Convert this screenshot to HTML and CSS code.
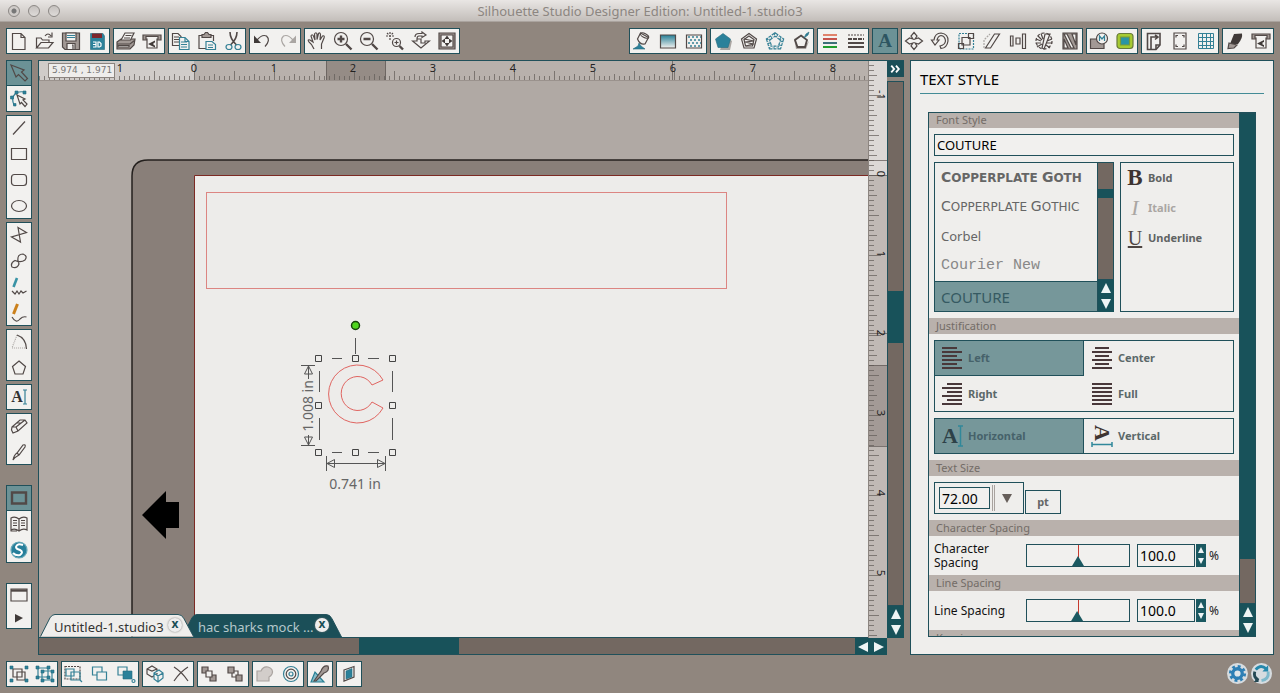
FILE: index.html
```html
<!DOCTYPE html>
<html lang="en">
<head>
<meta charset="utf-8">
<title>Silhouette Studio Designer Edition: Untitled-1.studio3</title>
<link rel="stylesheet" href="styles.css">
</head>
<body>
<header class="titlebar">
  <div class="lights"><button class="light dot" aria-label="Close"></button><button class="light" aria-label="Minimize"></button><button class="light" aria-label="Zoom"></button></div>
  <h1 class="title">Silhouette Studio Designer Edition: Untitled-1.studio3</h1>
</header>

<nav class="toolbar" aria-label="Main toolbar">
  <div class="group">
    <button class="tool" aria-label="New"><svg viewBox="0 0 20 20"><path d="M3.500 2.500H12L16 6.500V18.500H3.500ZM12 2.500V6.500H16"/></svg></button>
    <button class="tool" aria-label="Open"><svg viewBox="0 0 20 20"><path d="M1.500 17V7H6L7.500 9H14V11M1.500 17L6 11.500H18L13.500 17ZM10 5Q13 1 16 5M17 1.500V6H13"/></svg></button>
    <button class="tool" aria-label="Save"><svg viewBox="0 0 20 20"><path class="grayfill" d="M1.500 2H18.500V18.500H4L1.500 16Z"/><path class="whitefill" d="M5 2H15V10H5ZM6 12.500H14V18.500H6ZM11 14H12V18"/><path class="teal" d="M6 4.500H14M6 6.500H14"/></svg></button>
    <button class="tool" aria-label="Save to card"><svg viewBox="0 0 20 20"><path class="tealfill" d="M3.500 2.500H16L17.500 5V18.500H3.500Z"/><path class="redfill" d="M5 2.500H15V7H5Z"/><path class="white" d="M6 11H9V16H6M6 13.500H9M11 11H12.500L14 12.500V15L12.500 16H11Z"/></svg></button>
  </div>
  <div class="group">
    <button class="tool" aria-label="Print"><svg viewBox="0 0 20 20"><path class="grayfill" d="M1 11L5 8H19L18 14L14 18H1Z"/><path class="whitefill" d="M5 9L9 2H18L14.500 9Z"/><path d="M9.500 4.500H15.500M8 7H14M1 13H14L18.500 9.500"/><path class="whitefill" d="M2 14.500H13V16H2Z"/></svg></button>
    <button class="tool" aria-label="Send to Silhouette"><svg viewBox="0 0 20 20"><path class="grayfill" d="M1 4H19V9H1Z"/><path class="whitefill" d="M4 5.500H16V8H15V17H5V8H4Z"/><path class="darkfill" d="M6 13L13 9.500V11.500L11.500 12V14L13 14.500V16.500Z"/></svg></button>
  </div>
  <div class="group">
    <button class="tool" aria-label="Copy"><svg viewBox="0 0 20 20"><path class="whitefill" d="M1.500 2.500H7L10 5.500V14.500H1.500Z"/><path d="M3 6H8M3 8.500H8M3 11H8"/><path class="whitefill teal" d="M8.500 6.500H14L18 10.500V18.500H8.500Z"/><path class="teal" d="M10 11H16M10 13.500H16M10 16H16M14 7V10.500H18"/></svg></button>
    <button class="tool" aria-label="Paste"><svg viewBox="0 0 20 20"><path class="grayfill" d="M5 3.500H7L8.500 1.500H10.500L12 3.500H14V6.500H5Z"/><path d="M5 4.500H2V17.500H9M14 4.500H16.500V10"/><path class="whitefill teal" d="M9 10.500H15L18.500 13.500V18.500H9Z"/><path class="teal" d="M11 14H16M11 16.500H16"/></svg></button>
    <button class="tool" aria-label="Cut"><svg viewBox="0 0 20 20"><path d="M7 1Q7 8 13.500 14M14 1Q14 8 7.500 14" stroke-width="1.600"/><ellipse class="teal" cx="6" cy="16" rx="3" ry="2.500"/><ellipse class="teal" cx="15" cy="16" rx="3" ry="2.500"/></svg></button>
  </div>
  <div class="group">
    <button class="tool" aria-label="Undo"><svg viewBox="0 0 20 20"><path d="M5 9Q10 3 14.500 5Q19 9 13 15.500"/><path class="darkfill" d="M2 4.500V12H9Z"/></svg></button>
    <button class="tool" aria-label="Redo"><svg viewBox="0 0 20 20"><path class="faint" d="M15 9Q10 3 5.500 5Q1 9 7 15.500"/><path class="faintfill" d="M18 4.500V12H11Z"/></svg></button>
  </div>
  <div class="group">
    <button class="tool" aria-label="Pan"><svg viewBox="0 0 20 20"><path d="M7 18Q5 13 2 11Q0 8 3 9L6 11L4 5Q5 2.500 6.500 5L8 9L7.500 3Q9 .5 10 3V8.500L11.500 2.500Q13 1 13.500 3.500L13 9L15.500 5Q18 4 17 7L14.500 13V18"/></svg></button>
    <button class="tool" aria-label="Zoom in"><svg viewBox="0 0 20 20"><circle cx="8" cy="8" r="6.500"/><path class="heavy" d="M4.500 8H11.500M8 4.500V11.500M13 13L18.500 18.500"/></svg></button>
    <button class="tool" aria-label="Zoom out"><svg viewBox="0 0 20 20"><circle cx="8" cy="8" r="6.500"/><path class="heavy" d="M4.500 8H11.500M13 13L18.500 18.500"/></svg></button>
    <button class="tool" aria-label="Zoom selection"><svg viewBox="0 0 20 20"><circle cx="11.500" cy="11.500" r="4"/><path stroke-dasharray="2 1" d="M1 5H9M5 1V9M2 2L4 4M8 2L6 4"/><path d="M11.500 9.500V13.500M9.500 11.500H13.500"/><path class="heavy" d="M14.500 15L18 18.500"/></svg></button>
    <button class="tool" aria-label="Drag zoom"><svg viewBox="0 0 20 20"><path d="M10 17L1.500 10H6V8H10V12H14V10H18.500ZM4 6Q4 2.500 8 2.500H11V1L15 4L11 6.500V5H8Q6 5 6 8"/></svg></button>
    <button class="tool" aria-label="Fit to page"><svg viewBox="0 0 20 20"><path class="grayfill" d="M2 2H18V18H2Z"/><path class="whitefill" d="M4 4H16V16H4Z"/><path class="darkfill" d="M10 4.500L12.500 8H7.500ZM10 15.500L12.500 12H7.500ZM4.500 10L8 7.500V12.500ZM15.500 10L12 7.500V12.500Z"/></svg></button>
  </div>
  <div class="group push">
    <button class="tool" aria-label="Fill color"><svg viewBox="0 0 20 20"><path class="tealfill" d="M1 18L6 15L7 12L9 15L13 18Z"/><path class="whitefill" d="M8.500 2L16.500 6.500L13 13Q8 14 5.500 8Z"/><ellipse cx="12.500" cy="4.500" rx="4.500" ry="2" transform="rotate(28 12.500 4.500)"/></svg></button>
    <button class="tool" aria-label="Fill gradient"><svg viewBox="0 0 20 20"><defs><linearGradient id="fade" x2="0" y2="1"><stop offset="0" stop-color="#267f96"/><stop offset="1" stop-color="#f3f2f0"/></linearGradient></defs><path fill="url(#fade)" d="M2.500 4H17.500V17H2.500Z"/></svg></button>
    <button class="tool" aria-label="Fill pattern"><svg viewBox="0 0 20 20"><path d="M2.500 4H17.500V17H2.500Z"/><path class="teal dots" d="M4 6H17M6 9H17M4 12H17M6 15H17"/></svg></button>
  </div>
  <div class="group">
    <button class="tool" aria-label="Solid shape"><svg viewBox="0 0 20 20"><path fill="#aaa5a1" stroke="none" d="M12 5L19 10L17 19H7Z"/><path class="tealfill" d="M10 2.500L17.500 8L15 16.500H5L2.500 8Z"/></svg></button>
    <button class="tool" aria-label="Sketch"><svg viewBox="0 0 20 20"><path d="M10 2.500L17.500 8L15 17H5L2.500 8ZM10 5L15 8.500L13.500 15H6.500L5 8.500Z"/><path d="M5 8L15 10L6 11L14 13L7 15"/></svg></button>
    <button class="tool" aria-label="Rhinestone"><svg viewBox="0 0 20 20"><path class="teal dots wide" d="M10 3.500L17 8.500L14.500 16.500H5.500L3 8.500Z"/><path class="gap" d="M10 3.500L17 8.500L14.500 16.500H5.500L3 8.500Z"/></svg></button>
    <button class="tool" aria-label="Shadow"><svg viewBox="0 0 20 20"><path fill="#aaa5a1" stroke="none" d="M8 5L3 8L5 18H15L18 10L14 15H7Z"/><path class="whitefill" stroke-width="1.800" d="M10 4.500L16 9L14 16H6.500L4 9Z"/><path class="tealfill" d="M13 7L15 3L18 1L17 4Z"/></svg></button>
  </div>
  <div class="group">
    <button class="tool" aria-label="Line color"><svg viewBox="0 0 20 20"><path stroke="#e0826b" stroke-width="2" d="M3 4H17"/><path stroke="#c5524b" stroke-width="2" d="M3 8H17"/><path stroke="#3d7079" stroke-width="2" d="M3 12H17"/><path stroke="#1f9d2e" stroke-width="2" d="M3 16H17"/></svg></button>
    <button class="tool" aria-label="Line style"><svg viewBox="0 0 20 20"><path stroke-dasharray="2 1" d="M2 4H18"/><path stroke-dasharray="4 1" stroke-width="2" d="M2 8H18"/><path stroke-width="2" d="M2 12H18M2 16H18"/></svg></button>
  </div>
  <div class="group"><button class="tool on" aria-label="Text style" aria-pressed="true"><span class="letter">A</span></button></div>
  <div class="group">
    <button class="tool" aria-label="Move"><svg viewBox="0 0 20 20"><path d="M10 1.500L13 5L11 8L14.500 7L18.500 10L14.500 13L11 12L13 15L10 18.500L7 15L9 12L5.500 13L1.500 10L5.500 7L9 8L7 5Z"/></svg></button>
    <button class="tool" aria-label="Rotate"><svg viewBox="0 0 20 20"><path d="M1.500 9H4Q5 2 11 2Q18.500 3 18 10Q17 17 11 17.500L10 15Q15 14 15.500 10Q15 5 11 4.500Q8 5 7 9H9L5 14Z"/></svg></button>
    <button class="tool" aria-label="Scale"><svg viewBox="0 0 20 20"><path class="teal" stroke-dasharray="2 1" d="M3 2.500H17.500V18H3Z"/><path d="M2.500 12.500H7.500V17.500H2.500ZM6 6.500H14V14H6ZM12.500 2.500H17.500V7.500H12.500Z"/></svg></button>
    <button class="tool" aria-label="Shear"><svg viewBox="0 0 20 20"><path class="faint" stroke-dasharray="2 1" d="M2 17V9L8 3"/><path d="M3.500 17L12.500 3H17.500L8.500 17Z"/></svg></button>
    <button class="tool" aria-label="Align"><svg viewBox="0 0 20 20"><path d="M2.500 5H5V15H2.500ZM8 7H12V13H8ZM14.500 3H17.500V17.500H14.500Z"/></svg></button>
    <button class="tool" aria-label="Replicate"><svg viewBox="0 0 20 20"><path d="M8 17L11 3L16 3L10 18ZM4 5L8 9M2 8L7 10M1.500 12L7 12M3 16L8 13M7 2.500L9 8M13 10L18 8M12 12L18.500 12M12 14L16 17"/><circle cx="10" cy="10" r="8" stroke-dasharray="3 2"/></svg></button>
    <button class="tool" aria-label="Nesting"><svg viewBox="0 0 20 20"><path class="grayfill" d="M3 2H17V18H3Z"/><path class="whitefill" d="M4 3H7L14 17H11ZM4 8L8 17H4ZM12 3H16V14Z"/></svg></button>
  </div>
  <div class="group">
    <button class="tool" aria-label="Modify"><svg viewBox="0 0 20 20"><path class="grayfill" d="M1.500 8H15V17.500H1.500Z"/><circle class="whitefill" cx="13" cy="7.500" r="5.500"/><path class="teal" d="M10.500 10V5L13 8L15.500 5V10"/></svg></button>
    <button class="tool" aria-label="Trace"><svg viewBox="0 0 20 20"><rect x="2" y="2.500" width="16" height="15" rx="3" fill="#a7cb32" stroke="#687b3b"/><path fill="#2a94a5" stroke="#7c9c35" d="M5.500 6H14.500V14H5.500Z"/></svg></button>
  </div>
  <div class="group">
    <button class="tool" aria-label="Page setup"><svg viewBox="0 0 20 20"><path stroke-width="1.600" d="M3.500 2.500H16V14L12 18.500H3.500Z"/><path stroke-width="1.600" d="M7 18V6H14M11 4L14 6L11 8.500M12 18V14H16"/></svg></button>
    <button class="tool" aria-label="Registration marks"><svg viewBox="0 0 20 20"><path d="M4 2H16V18H4Z"/><path d="M6 6.500V4.500H8M12 4.500H14V6.500M14 13.500V15.500H12M8 15.500H6V13.500"/></svg></button>
    <button class="tool" aria-label="Grid"><svg viewBox="0 0 20 20"><path class="teal thin" d="M2.500 2.500H17.500V17.500H2.500ZM6.500 2.500V17.500M10.500 2.500V17.500M14.500 2.500V17.500M2.500 6.500H17.500M2.500 10.500H17.500M2.500 14.500H17.500"/></svg></button>
  </div>
  <div class="group">
    <button class="tool" aria-label="Cut settings"><svg viewBox="0 0 20 20"><path class="darkfill" d="M9 3L17 2.500Q18 7 13 13H5Z"/><path class="grayfill" d="M4 12L12 14L9 17L3 17.500Z"/></svg></button>
    <button class="tool" aria-label="Cut"><svg viewBox="0 0 20 20"><path class="grayfill" d="M1 3H19V8H1Z"/><path class="whitefill" d="M4 4.500H16V7H15V17H5V7H4Z"/><path class="darkfill" d="M6 12.500L13 9V11L11.500 11.500V13.500L13 14V16Z"/></svg></button>
  </div>
</nav>

<main class="main">
  <nav class="sidebar" aria-label="Drawing tools">
    <div class="group">
      <button class="tool on" aria-label="Select" aria-pressed="true"><svg viewBox="0 0 20 20"><path d="M2 2L15 7L12.500 9L18.500 15.500L16 18L9.500 11.500L7 14Z"/></svg></button>
      <button class="tool" aria-label="Edit points"><svg viewBox="0 0 20 20"><path class="teal" d="M5 16Q2 9 6 5Q9 2 15 3"/><path class="tealfill" d="M1.500 7H4.500V10H1.500ZM4.500 14.500H7V17H4.500ZM6 2H9V5H6ZM14 2H17V5H14Z"/><path class="whitefill" d="M8 6L16 10L14 11L18 15L16 17.500L12.500 13.500L11 15Z"/></svg></button>
    </div>
    <div class="group">
      <button class="tool" aria-label="Line"><svg viewBox="0 0 20 20"><path d="M4 16.500L16 3.500"/></svg></button>
      <button class="tool" aria-label="Rectangle"><svg viewBox="0 0 20 20"><path d="M2.500 4.500H17.500V15.500H2.500Z"/></svg></button>
      <button class="tool" aria-label="Rounded rectangle"><svg viewBox="0 0 20 20"><rect x="2.500" y="4.500" width="15" height="11" rx="3"/></svg></button>
      <button class="tool" aria-label="Ellipse"><svg viewBox="0 0 20 20"><ellipse cx="10" cy="10" rx="7.500" ry="5.500"/></svg></button>
    </div>
    <div class="group">
      <button class="tool" aria-label="Polygon"><svg viewBox="0 0 20 20"><path d="M9 2.500L17.500 7.500L2.500 12L11.500 17Z"/></svg></button>
      <button class="tool" aria-label="Curve"><svg viewBox="0 0 20 20"><path d="M9 10Q8 3 14 3Q19 5 16 9Q12 12 6 9.500Q1 12 3 16Q8 18 10 13Z"/></svg></button>
      <button class="tool" aria-label="Freehand"><svg viewBox="0 0 20 20"><path stroke="#3993a5" stroke-width="2.600" d="M8 1L4.500 10"/><path d="M3 14L6 17L8 14L10 17L12 14L14 16L17.500 14"/></svg></button>
      <button class="tool" aria-label="Smooth freehand"><svg viewBox="0 0 20 20"><path stroke="#cb801b" stroke-width="3" d="M8.500 1L4.500 11"/><path d="M3 14Q7 21 11 16Q14 13 17.500 14"/></svg></button>
    </div>
    <div class="group">
      <button class="tool" aria-label="Arc"><svg viewBox="0 0 20 20"><path class="faint" stroke-dasharray="1 1" d="M8 3L3 16H17"/><path d="M8 3Q17 6 17.500 17"/></svg></button>
      <button class="tool" aria-label="Regular polygon"><svg viewBox="0 0 20 20"><path d="M10 3L16.500 8.500L14 16H6L3.500 8.500Z"/></svg></button>
    </div>
    <div class="group"><button class="tool" aria-label="Text"><span class="letter small">A</span><svg class="cursor" viewBox="0 0 4 16"><path class="teal" d="M0 1H4M2 1V15M0 15H4"/></svg></button></div>
    <div class="group">
      <button class="tool" aria-label="Eraser"><svg viewBox="0 0 20 20"><path d="M3 11L11 4L16 4L18 7L9 15L4 17L2.500 14ZM3 11L7 11L9 15M7 11L16 4M8 7L12 7"/></svg></button>
      <button class="tool" aria-label="Knife"><svg viewBox="0 0 20 20"><path d="M4 18Q5 13 8 11L14 3Q17 2 16 5L10 13Q6 15 4 18ZM8 11L10 13"/></svg></button>
    </div>
    <div class="group apart">
      <button class="tool on" aria-label="Page view" aria-pressed="true"><svg viewBox="0 0 20 20"><path class="heavy" d="M3 4.500H17V15.500H3Z"/></svg></button>
      <button class="tool" aria-label="Library"><svg viewBox="0 0 20 20"><path d="M10 5Q6 2 2 4V16Q6 14 10 17Q14 14 18 16V4Q14 2 10 5V17M4 6.500H8M4 9H8M4 11.500H8M12 6.500H16M12 9H16M12 11.500H16M1.500 17H8"/></svg></button>
      <button class="tool" aria-label="Store"><svg viewBox="0 0 20 20"><circle cx="10" cy="10" r="8" fill="#277f9b" stroke="#69a9b8"/><path stroke="#fff" stroke-width="2" d="M14 5Q8 3 7 7Q7 9 11 10Q15 12 11 15Q7 16 4 13"/></svg></button>
    </div>
    <div class="group apart short">
      <button class="tool" aria-label="Window"><svg viewBox="0 0 20 20"><path d="M2 4H18V16H2Z"/><path class="heavy" d="M2 5.500H18"/></svg></button>
      <button class="tool" aria-label="Play"><svg viewBox="0 0 20 20"><path class="darkfill" d="M6 6L14 10L6 14.500Z"/></svg></button>
    </div>
  </nav>

  <section class="workspace">
    <div class="ruler-h">
      <svg class="fill" aria-hidden="true">
        <defs><pattern id="hticks" width="80" height="20" x="155" patternUnits="userSpaceOnUse"><path class="tick" d="M.5 10V20M5.500 15V20M10.500 15V20M15.500 15V20M20.500 13V20M25.500 15V20M30.500 15V20M35.500 15V20M40.500 10V20M45.500 15V20M50.500 15V20M55.500 15V20M60.500 13V20M65.500 15V20M70.500 15V20M75.500 15V20"/></pattern></defs>
        <rect width="155" height="20" fill="#d0ccc9"/><rect x="287" width="60" height="20" fill="#958c86"/>
        <rect width="100%" height="20" fill="url(#hticks)"/><path class="mark" d="M287.500 0V20M346.500 0V20M633.500 0V20"/>
        <g class="digits"><text x="81" y="11">1</text><text x="155" y="11">0</text><text x="235" y="11">1</text><text x="314" y="11">2</text><text x="394" y="11">3</text><text x="474" y="11">4</text><text x="554" y="11">5</text><text x="634" y="11">6</text><text x="714" y="11">7</text><text x="794" y="11">8</text></g>
      </svg>
      <output class="coords">5.974 , 1.971</output>
    </div>
    <div class="canvas">
      <svg class="fill" role="img" aria-label="Drawing page"><g transform="translate(-39 -81)">
        <path class="mat" d="M2000 160H148Q132 160 132 176V2000H2000Z"/>
        <path class="page" d="M2000 175.500H194.500V2000H2000Z"/>
        <rect class="shape" x="206.500" y="192.500" width="520" height="96"/>
        <path class="shape bright" d="M383 380A29 29 0 1 0 383 408L372 402A16.500 17 0 1 1 372 385Z"/>
        <g class="guide"><path d="M355.500 338V354M332 358.500H342M368 358.500H379M332 452.500H342M368 452.500H379M319.500 371V392M319.500 418V440M392.500 371V392M392.500 418V440"/>
        <path class="handle" d="M315.500 355.500h6v6h-6zM352.500 355.500h6v6h-6zM389.500 355.500h6v6h-6zM315.500 402.500h6v6h-6zM389.500 402.500h6v6h-6zM315.500 449.500h6v6h-6zM352.500 449.500h6v6h-6zM389.500 449.500h6v6h-6z"/>
        <path d="M301 365.500H315M301 445.500H315M308.500 366V379M308.500 435V445M308.500 366L304.500 374H312.500ZM308.500 445L304.500 437H312.500ZM326.500 456V471M385.500 456V471M327 463.500H385M327 463.500L334.500 459.500V467.500ZM385 463.500L377.500 459.500V467.500Z"/></g>
        <circle cx="355.500" cy="325.500" r="4" fill="#4fd51e" stroke="#16420b" stroke-width="1.500"/>
        <text class="measure" x="355" y="489">0.741 in</text><text class="measure" transform="translate(313 406) rotate(-90)">1.008 in</text>
        <path fill="#000" d="M142 515L166 491V502H179V528H166V539Z"/>
      </g></svg>
      <div class="tabs">
        <button class="tab current"><svg class="tabshape" viewBox="0 0 154 24" preserveAspectRatio="none"><path d="M.5 23.500L10 4Q12 .5 15 .5H138Q142 .5 144 5L153.500 23.500"/></svg><span>Untitled-1.studio3</span><b class="close">x</b></button>
        <button class="tab"><svg class="tabshape" viewBox="0 0 154 24" preserveAspectRatio="none"><path d="M0 12L4 4Q6 .5 9 .5H138Q142 .5 144 5L153.500 24H6Z"/></svg><span>hac sharks mock ...</span><b class="close">x</b></button>
      </div>
    </div>
    <div class="ruler-v">
      <svg class="fill" aria-hidden="true">
        <defs><pattern id="vticks" width="20" height="80" y="114" patternUnits="userSpaceOnUse"><path class="tick" d="M0 .5H12M0 5.500H5M0 10.500H5M0 15.500H5M0 20.500H8M0 25.500H5M0 30.500H5M0 35.500H5M0 40.500H10M0 45.500H5M0 50.500H5M0 55.500H5M0 60.500H8M0 65.500H5M0 70.500H5M0 75.500H5"/></pattern></defs>
        <rect width="20" height="114" fill="#dcd8d6"/><rect y="304" width="20" height="81" fill="#a39a96"/>
        <rect width="20" height="100%" fill="url(#vticks)"/><path class="mark" d="M0 99.500H20M0 114.500H20M0 272.500H20M0 304.500H20M0 385.500H20"/>
        <g class="digits"><text transform="translate(8 34) rotate(90)">-1</text><text transform="translate(8 113) rotate(90)">0</text><text transform="translate(8 193) rotate(90)">1</text><text transform="translate(8 272) rotate(90)">2</text><text transform="translate(8 352) rotate(90)">3</text><text transform="translate(8 432) rotate(90)">4</text><text transform="translate(8 512) rotate(90)">5</text></g>
      </svg>
    </div>
    <div class="side-scroll">
      <button class="expand" aria-label="Collapse panel"><svg viewBox="0 0 17 17"><path d="M4 5L7 8.500L4 12M9 5L12 8.500L9 12"/></svg></button>
      <div class="track"><div class="thumb"></div></div>
      <button class="arrow" aria-label="Scroll up"><svg viewBox="0 0 16 16"><path d="M8 3L13 13H3Z"/></svg></button>
      <button class="arrow" aria-label="Scroll down"><svg viewBox="0 0 16 16"><path d="M8 13L13 3H3Z"/></svg></button>
    </div>
    <div class="bottom-scroll">
      <div class="track"><div class="thumb"></div></div>
      <button class="arrow" aria-label="Scroll left"><svg viewBox="0 0 16 16"><path d="M3 8L13 3V13Z"/></svg></button>
      <button class="arrow" aria-label="Scroll right"><svg viewBox="0 0 16 16"><path d="M13 8L3 3V13Z"/></svg></button>
    </div>
  </section>

  <aside class="panel">
    <h2 class="panel-title">TEXT STYLE</h2>
    <div class="scrollbox">
      <form class="options">
        <h3 class="section first">Font Style</h3>
        <div class="block">
          <input class="field fontname" aria-label="Font name" value="COUTURE">
          <div class="fonts">
            <div class="fontlist">
              <button type="button" class="font caps strong"><span>Copperplate</span> <span>Goth</span></button>
              <button type="button" class="font caps"><span>Copperplate</span> <span>Gothic</span></button>
              <button type="button" class="font">Corbel</button>
              <button type="button" class="font mono">Courier New</button>
              <button type="button" class="font chosen">COUTURE</button>
            </div>
            <div class="list-scroll"><div class="track"><div class="thumb"></div></div>
              <button type="button" class="arrow" aria-label="Previous fonts"><svg viewBox="0 0 16 16"><path d="M8 3L13 13H3Z"/></svg></button>
              <button type="button" class="arrow" aria-label="Next fonts"><svg viewBox="0 0 16 16"><path d="M8 13L13 3H3Z"/></svg></button>
            </div>
            <div class="styles">
              <button type="button" class="style"><span class="glyph bold">B</span>Bold</button>
              <button type="button" class="style" disabled><span class="glyph italic">I</span>Italic</button>
              <button type="button" class="style"><span class="glyph under">U</span>Underline</button>
            </div>
          </div>
        </div>
        <h3 class="section">Justification</h3>
        <div class="block">
          <div class="choices">
            <label class="choice"><input type="radio" name="just" checked><svg viewBox="0 0 20 22"><path d="M0 1H15M0 5H20M0 9H15M0 13H20M0 17H15M0 21H20"/></svg>Left</label>
            <label class="choice"><input type="radio" name="just"><svg viewBox="0 0 20 22"><path d="M3 1H17M0 5H20M3 9H17M0 13H20M3 17H17M0 21H20"/></svg>Center</label>
            <label class="choice"><input type="radio" name="just"><svg viewBox="0 0 20 22"><path d="M5 1H20M0 5H20M5 9H20M0 13H20M5 17H20M0 21H20"/></svg>Right</label>
            <label class="choice"><input type="radio" name="just"><svg viewBox="0 0 20 22"><path d="M0 1H20M0 5H20M0 9H20M0 13H20M0 17H20M0 21H20"/></svg>Full</label>
          </div>
          <div class="choices">
            <label class="choice"><input type="radio" name="dir" checked><span class="dir">A<svg class="ibar" viewBox="0 0 5 22"><path d="M0 1H5M2.500 1V21M0 21H5"/></svg></span>Horizontal</label>
            <label class="choice"><input type="radio" name="dir"><span class="dir vertical"><i>A</i><svg class="hbar" viewBox="0 0 22 5"><path d="M1 0V5M1 2.500H21M21 0V5"/></svg></span>Vertical</label>
          </div>
        </div>
        <h3 class="section">Text Size</h3>
        <div class="block size">
          <div class="combo"><input class="field" aria-label="Text size" value="72.00"><button type="button" class="drop" aria-label="Choose size"><svg viewBox="0 0 10 9"><path d="M0 0H10L5 9Z"/></svg></button></div>
          <button type="button" class="unit">pt</button>
        </div>
        <h3 class="section">Character Spacing</h3>
        <div class="block row">
          <label class="name" for="cs">Character Spacing</label><input id="cs" class="slider" type="range" value="50">
          <div class="number"><input class="field" aria-label="Character spacing percent" value="100.0"><button type="button" class="stepper" aria-label="Adjust character spacing"><svg viewBox="0 0 10 23"><path d="M5 3L8 9H2ZM5 20L8 14H2Z"/></svg></button><span class="percent">%</span></div>
        </div>
        <h3 class="section">Line Spacing</h3>
        <div class="block row">
          <label class="name" for="ls">Line Spacing</label><input id="ls" class="slider" type="range" value="49">
          <div class="number"><input class="field" aria-label="Line spacing percent" value="100.0"><button type="button" class="stepper" aria-label="Adjust line spacing"><svg viewBox="0 0 10 23"><path d="M5 3L8 9H2ZM5 20L8 14H2Z"/></svg></button><span class="percent">%</span></div>
        </div>
        <h3 class="section">Kerning</h3>
      </form>
      <div class="panel-scroll"><div class="track"><div class="thumb"></div></div>
        <button class="arrow" aria-label="Scroll panel up"><svg viewBox="0 0 16 16"><path d="M8 3L13 13H3Z"/></svg></button>
        <button class="arrow" aria-label="Scroll panel down"><svg viewBox="0 0 16 16"><path d="M8 13L13 3H3Z"/></svg></button>
      </div>
    </div>
  </aside>
</main>

<footer class="toolbar" aria-label="Object tools">
  <div class="group">
    <button class="tool" aria-label="Group"><svg viewBox="0 0 20 20"><path d="M4 5H13V13H4ZM8 8H16V16H8Z"/><path class="tealfill" d="M1 2H4V5H1ZM16 2H19V5H16ZM1 15H4V18H1ZM16 15H19V18H16Z"/></svg></button>
    <button class="tool" aria-label="Ungroup"><svg viewBox="0 0 20 20"><path class="teal" d="M3 4H13V13H3ZM7 7H17V16H7Z"/><path class="tealfill" d="M1 2H4V5H1ZM12 2H15V5H12ZM1 12H4V15H1ZM12 12H15V15H12ZM6 6H9V9H6ZM16 6H19V9H16ZM6 15H9V18H6ZM16 15H19V18H16Z"/></svg></button>
  </div>
  <div class="group">
    <button class="tool" aria-label="Select all"><svg viewBox="0 0 20 20"><path stroke-dasharray="2 1" d="M1 2.500H16V15H1Z"/><path class="teal" d="M2 5H10V12H2ZM7 8H16V16H7ZM16 16L18 18"/></svg></button>
    <button class="tool" aria-label="Duplicate"><svg viewBox="0 0 20 20"><path class="teal" d="M2.500 3H12V11H2.500Z"/><path class="teal whitefill" d="M7 8H16.500V16H7Z"/></svg></button>
    <button class="tool" aria-label="Select by color"><svg viewBox="0 0 20 20"><path class="teal" d="M2 3H11V11H2Z"/><path class="tealfill" d="M7 7H16V15H7Z"/><circle class="teal" cx="17.500" cy="17" r="1.500"/></svg></button>
  </div>
  <div class="group">
    <button class="tool" aria-label="Compound path"><svg viewBox="0 0 20 20"><path d="M2 5L7 2L12 5V10L7 13L2 10ZM2 5L7 7L12 5"/><path class="teal whitefill" d="M9 9L14 6L18 9V14L13 18L9 15ZM9 9L13 12L18 9M13 12V18"/></svg></button>
    <button class="tool" aria-label="Delete"><svg viewBox="0 0 20 20"><path d="M3 3Q11 8 17 17M17 3Q9 8 3 17"/></svg></button>
  </div>
  <div class="group">
    <button class="tool" aria-label="Bring to front"><svg viewBox="0 0 20 20"><path class="grayfill" d="M2 3H8V9H2ZM10 11H16V17H10Z"/><path class="whitefill" d="M6 7H12V13H6Z"/></svg></button>
    <button class="tool" aria-label="Send to back"><svg viewBox="0 0 20 20"><path class="whitefill" d="M6 7H12V13H6Z"/><path class="grayfill" d="M2 3H8V9H2ZM10 11H16V17H10Z"/></svg></button>
  </div>
  <div class="group">
    <button class="tool" aria-label="Weld"><svg viewBox="0 0 20 20"><path fill="#d2cdca" stroke="#aaa4a0" d="M2 7H6Q8 2 13 3Q19 5 17 10Q16 12 14 13V17H2Z"/></svg></button>
    <button class="tool" aria-label="Offset"><svg viewBox="0 0 20 20"><circle cx="10" cy="10" r="7.500" class="teal"/><circle cx="10" cy="10" r="4.800"/><circle cx="10" cy="10" r="2" class="teal"/></svg></button>
  </div>
  <div class="group"><button class="tool" aria-label="Eyedropper"><svg viewBox="0 0 20 20"><path fill="#83bdcb" stroke="#287f93" d="M1 18L5 8L14 18Z"/><path class="grayfill" d="M4 17L11 7Q13 1 18 2Q20 7 14 9L6 17Z"/></svg></button></div>
  <div class="group"><button class="tool" aria-label="Layers"><svg viewBox="0 0 20 20"><path d="M5 6L15 2.500V13L5 17Z"/><path class="tealfill" d="M7 7L13 4.500V13L7 15Z"/></svg></button></div>
  <div class="status">
    <button class="round" aria-label="Preferences"><svg viewBox="0 0 22 22"><circle cx="11" cy="11" r="11" fill="#d6dce0"/><circle cx="11" cy="11" r="7.500" fill="none" stroke="#2d7fb5" stroke-width="3" stroke-dasharray="3 2.890"/><circle cx="11" cy="11" r="5" fill="#dfe6ea" stroke="#2d7fb5" stroke-width="3.500"/></svg></button>
    <button class="round" aria-label="Updates"><svg viewBox="0 0 22 22"><circle cx="11" cy="11" r="11" fill="#d6dce0"/><g fill="none" stroke-width="3"><path stroke="#244853" d="M8 18Q2 15 4 9"/><path stroke="#2588ac" d="M5 7Q10 1 16 6"/><path stroke="#7eb9cc" d="M18 9Q19 17 11 18.500"/></g><path fill="#2588ac" d="M18 2V9H12Z"/><path fill="#244853" d="M8 20H3L7 15Z"/></svg></button>
  </div>
</footer>
</body>
</html>
```
FILE: styles.css
```css
* { box-sizing: border-box; }
body { margin: 0; height: 100vh; display: flex; flex-direction: column; overflow: hidden; background: #90867e; color: #555; font: 12px/16px "Noto Sans", "Open Sans", sans-serif; }
button { margin: 0; padding: 0; border: 0; background: none; color: inherit; font: inherit; }
input { font: inherit; min-width: 0; }
svg { display: block; }
h1, h2, h3 { margin: 0; font-weight: 400; }

.titlebar { position: relative; height: 22px; flex: none; display: flex; align-items: center; justify-content: center; background: linear-gradient(#e9e6e4, #c3beba); border-bottom: 1px solid #aaa39e; }
.lights { position: absolute; left: 8px; display: flex; gap: 8px; }
.light { width: 12px; height: 12px; border: 1px solid #8c8885; border-radius: 50%; background: linear-gradient(#c5c1be, #dedbd9); }
.dot { background: radial-gradient(circle, #777 2px, #d0ccc9 3px); }
.title { font-size: 13px; line-height: 20px; color: #8c8681; }

.toolbar { display: flex; flex: none; gap: 3px; padding: 6px; }
.push { margin-left: auto; }
.group { display: flex; flex: none; background: #f2f1ef; outline: 1px solid #20505a; outline-offset: -1px; }
.tool { width: 26px; height: 26px; display: flex; align-items: center; justify-content: center; }
.tool svg { width: 20px; height: 20px; fill: none; stroke: #514947; stroke-width: 1.2; }
.tool.on { background: #6c9296; outline: 1px solid #20505a; outline-offset: -1px; }
.tool svg .teal { stroke: #358196; }
.tool svg .thin { stroke-width: 1; }
.tool svg .tealfill { fill: #2b819a; stroke: #276b7d; stroke-width: 0.6; }
.tool svg .whitefill { fill: #f2f1ef; }
.tool svg .grayfill { fill: #a29995; }
.tool svg .darkfill { fill: #403a38; stroke: none; }
.tool svg .redfill { fill: #7d252b; stroke: none; }
.tool svg .white { stroke: #fff; }
.tool svg .faint { stroke: #aaa6a3; }
.tool svg .faintfill { fill: #aaa6a3; stroke: none; }
.tool svg .heavy { stroke-width: 2.4; }
.tool svg .dots { stroke-width: 1.6; stroke-dasharray: 2 2; }
.tool svg .wide { stroke-width: 4; stroke-dasharray: 3 1; }
.tool svg .gap { stroke: #f2f1ef; stroke-width: 1.6; stroke-dasharray: 2 2; }
.letter { font: bold 19px/24px "Liberation Serif", serif; color: #2d5561; }
.letter.small { font-size: 16px; color: #333; }
.tool .cursor { width: 4px; height: 16px; }

.main { flex: 1; min-height: 0; display: flex; gap: 6px; padding: 0 6px; }
.sidebar { display: flex; flex-direction: column; gap: 3px; flex: none; }
.sidebar .group { flex-direction: column; }
.sidebar .apart { margin-top: 17px; }
.short .tool { height: 23px; }

.workspace { flex: 1; min-width: 0; display: grid; grid-template-columns: 1fr 19px 17px; grid-template-rows: 20px 1fr 17px; border-left: 1px solid #20505a; border-top: 1px solid #20505a; }
.fill { width: 100%; height: 100%; }
.ruler-h { position: relative; background: #b8b1ac; border-bottom: 1px solid #9a928d; overflow: hidden; }
.ruler-v { grid-column: 2; grid-row: 1 / 3; background: #c0b9b5; border-left: 1px solid #8c8580; overflow: hidden; }
.tick { stroke: #615b57; stroke-opacity: 0.7; }
.mark { stroke: #5c5552; stroke-opacity: 0.7; }
.digits { font-size: 11px; fill: #222; text-anchor: middle; }
.coords { position: absolute; left: 9px; top: 2px; padding: 0 2px 0 3px; border: 1px solid #8c8580; background: #eeedeb; font: 9px/13px "DejaVu Sans", sans-serif; color: #777; }
.canvas { position: relative; grid-column: 1; grid-row: 2; min-height: 0; background: #b0a9a4; overflow: hidden; border-bottom: 1px solid #20505a; }
.canvas .fill { position: absolute; }
.mat { fill: #897f79; stroke: #24201e; stroke-width: 1.5; }
.page { fill: #edecea; stroke: #7d2a24; }
.shape { fill: none; stroke: #dc8582; }
.bright { stroke: #e06561; }
.guide { fill: none; stroke: #555; }
.handle { fill: #edecea; stroke: #444; }
.measure { font-size: 14px; fill: #666; text-anchor: middle; }

.tabs { position: absolute; left: 1px; bottom: 0; display: flex; }
.tab { position: relative; width: 154px; height: 23px; display: flex; align-items: center; justify-content: space-between; padding: 2px 12px 0 14px; color: #b5c8cb; font-size: 13px; }
.tab + .tab { margin-left: -6px; padding: 2px 13px 0 10px; }
.tab.current { z-index: 1; color: #333; }
.tab span, .close { position: relative; white-space: nowrap; }
.tabshape { position: absolute; inset: 0; width: 100%; height: 100%; fill: #1b4f58; stroke: #20505a; }
.current .tabshape { fill: #efeeec; }
.close { width: 14px; height: 14px; margin-bottom: 4px; border-radius: 50%; background: #eee; box-shadow: 0 0 2px #777; color: #1b4f58; font: bold 12px/12px "Noto Sans", sans-serif; }

.side-scroll { grid-column: 3; grid-row: 1 / 3; display: flex; flex-direction: column; min-height: 0; }
.expand { height: 16px; margin-bottom: 4px; background: #1b4f58; flex: none; }
.expand svg { height: 16px; width: 17px; fill: none; stroke: #fff; stroke-width: 2; }
.track { flex: 1; background: #736861; border: 1px solid #20505a; }
.thumb { background: #18525a; }
.arrow { display: flex; align-items: center; justify-content: center; flex: none; height: 16px; background: #18525a; }
.arrow svg { width: 16px; height: 16px; fill: #eef5f5; }
.side-scroll .thumb { height: 10%; margin-top: 209px; }
.bottom-scroll { grid-column: 1 / 3; grid-row: 3; display: flex; }
.bottom-scroll .track { border-width: 0 0 1px; display: flex; }
.bottom-scroll .thumb { width: 100px; margin-left: 320px; }
.bottom-scroll .arrow { height: 17px; }

.panel { width: 364px; flex: none; display: flex; flex-direction: column; padding: 8px 9px 17px; border: 1px solid #20505a; background: #efeeec; }
.panel-title { padding-bottom: 3px; border-bottom: 1px solid #438b96; color: #000; font-size: 15px; line-height: 21px; }
.scrollbox { flex: 1; min-height: 0; display: flex; margin: 18px 8px 0; border: 1px solid #20505a; border-right: 0; }
.options { flex: 1; min-width: 0; overflow: hidden; margin: 0; }
.section { height: 16px; padding-left: 7px; background: #b9b1ac; color: #736c67; font-size: 11px; line-height: 15px; }
.section.first { height: 15px; line-height: 14px; }
.block { padding: 6px 5px; display: flex; flex-direction: column; gap: 6px; }
.field { border: 1px solid #20505a; border-radius: 0; background: #f1f0ee; color: #000; padding: 0 2px; font-size: 14px; outline: 0; }
.fontname { height: 22px; font-size: 13px; }
.fonts { display: flex; height: 150px; }
.fontlist { width: 164px; border: 1px solid #20505a; overflow: hidden; }
.font { display: block; width: 100%; height: 30px; padding-left: 6px; text-align: left; white-space: nowrap; overflow: hidden; color: #666; font-size: 13px; }
.font:first-child { height: 28px; }
.caps { font-family: "DejaVu Sans", sans-serif; font-size: 12px; text-transform: uppercase; }
.caps span { display: inline-block; }
.caps span::first-letter { font-size: 14px; }
.strong { font-weight: 700; }
.mono { font-family: "Liberation Mono", monospace; font-size: 15px; color: #888; }
.chosen { border-top: 1px solid #20505a; background: #76979a; color: #355a62; font-size: 15px; }
.list-scroll { width: 16px; display: flex; flex-direction: column; }
.list-scroll .track { border-left: 0; }
.list-scroll .thumb { height: 9px; margin-top: 26px; }
.styles { flex: 1; margin-left: 6px; border: 1px solid #20505a; }
.style { display: flex; align-items: center; width: 100%; height: 30px; padding-left: 3px; gap: 2px; font-size: 11px; font-weight: 700; color: #5f6363; }
.style:disabled { color: #aaa6a3; }
.glyph { width: 22px; font: 20px/22px "Liberation Serif", serif; text-align: center; }
.bold { font-weight: 700; font-size: 23px; color: #3e3431; }
.italic { font-style: italic; font-size: 22px; }
.under { text-decoration: underline; color: #4e4542; }
.choices { display: grid; grid-template-columns: 1fr 1fr; outline: 1px solid #20505a; outline-offset: -1px; }
.choice { display: flex; align-items: center; height: 36px; padding-left: 8px; gap: 6px; color: #5b6869; font-size: 11px; font-weight: 700; }
.choice:has(input:checked) { background: #76979a; outline: 1px solid #20505a; outline-offset: -1px; color: #46626a; }
.choice input { position: absolute; opacity: 0; width: 1px; height: 1px; margin: 0; }
.choice > svg { width: 20px; height: 22px; stroke: #49383a; stroke-width: 2; }
.dir { width: 20px; height: 24px; display: flex; align-items: center; color: #2d4148; font: bold 22px/24px "Liberation Serif", serif; }
.dir svg { flex: none; fill: none; stroke: #31889a; stroke-width: 1.5; }
.ibar { width: 5px; height: 22px; }
.vertical { flex-direction: column; color: #3e3431; }
.vertical i { width: 16px; height: 18px; line-height: 18px; font-style: normal; transform: rotate(90deg); }
.hbar { width: 22px; height: 5px; }
.size { flex-direction: row; gap: 1px; align-items: flex-end; }
.combo { display: flex; align-items: center; width: 90px; height: 32px; padding: 0 4px; border: 1px solid #20505a; }
.combo .field { width: 51px; height: 22px; }
.drop { flex: 1; height: 26px; margin-left: 2px; border-left: 3px double #a9a39f; display: flex; align-items: center; justify-content: center; }
.drop svg { width: 10px; height: 9px; fill: #665e5a; }
.unit { width: 36px; height: 24px; border: 1px solid #20505a; font-size: 11px; font-weight: 700; color: #666; }
.row { height: 39px; flex-direction: row; align-items: center; gap: 7px; color: #222; }
.name { width: 85px; line-height: 14px; color: #111; }
.slider { appearance: none; width: 104px; height: 23px; margin: 0; border: 1px solid #20505a; background: linear-gradient(#c53a2e, #c53a2e) 50% 0 / 1px 100% no-repeat #f1f0ee; }
.slider::-webkit-slider-thumb { appearance: none; width: 12px; height: 10px; margin-top: 11px; background: #1b5961; clip-path: polygon(50% 0, 100% 100%, 0 100%); }
.number { display: flex; align-items: center; gap: 1px; }
.number .field { width: 58px; height: 23px; }
.stepper { width: 10px; height: 23px; background: #1b5961; }
.stepper svg { width: 10px; height: 23px; fill: #eef5f5; }
.percent { margin-left: 2px; }
.panel-scroll { width: 17px; flex: none; display: flex; flex-direction: column; background: #18525a; }
.panel-scroll .thumb { height: 91%; }

.status { display: flex; align-items: center; gap: 3px; margin: 0 2px 2px auto; }
.round svg { width: 21px; height: 21px; }
```
